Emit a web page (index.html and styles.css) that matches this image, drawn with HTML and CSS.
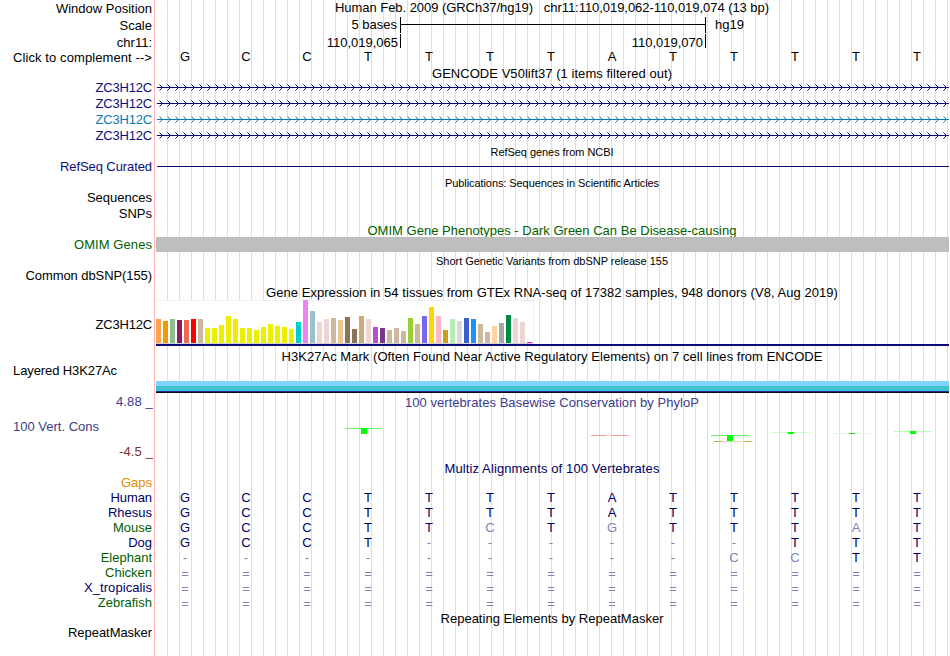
FILE: index.html
```
<!DOCTYPE html>
<html lang="en">

<head>
  <meta charset="UTF-8" />
  <meta name="viewport" content="width=device-width, initial-scale=1.0" />
  <title>Human chr11:110,019,062-110,019,074</title>
  <link rel="stylesheet" href="styles.css">
</head>

<body>
  <div class="browser">
    <!-- position and ruler -->
    <div class="row h17"><div class="label low">Window Position</div>
      <div class="title"><span data-w="434">Human Feb. 2009 (GRCh37/hg19) &nbsp; chr11:110,019,062-110,019,074 (13 bp)</span></div>
    </div>
    <div class="row h17"><div class="label low">Scale</div>
      <div class="ruler">
        <span class="before-tick scale-text">5 bases</span>
        <span class="scale-bar"></span>
        <span class="genome">hg19</span>
      </div>
    </div>
    <div class="row h15"><div class="label low">chr11:</div>
      <div class="ruler">
        <span class="before-tick pos">110,019,065</span>
        <span class="before-tick pos second">110,019,070</span>
      </div>
    </div>
    <div class="row h17"><div class="label low"><span data-w="139">Click to complement --&gt;</span></div><div class="bases" data-seq="GCCTTTTATTTTT"></div></div>

    <!-- GENCODE -->
    <div class="row h14"><div class="label"></div><div class="title"><span data-w="240">GENCODE V50lift37 (1 items filtered out)</span></div></div>
    <div class="row h16 navy"><div class="label"><span data-w="56.5">ZC3H12C</span></div><div class="gene"></div></div>
    <div class="row h16 navy"><div class="label"><span data-w="56.5">ZC3H12C</span></div><div class="gene"></div></div>
    <div class="row h16 blue"><div class="label"><span data-w="56.5">ZC3H12C</span></div><div class="gene"></div></div>
    <div class="row h16 navy"><div class="label"><span data-w="56.5">ZC3H12C</span></div><div class="gene"></div></div>

    <!-- RefSeq -->
    <div class="row h15"><div class="label"></div><div class="title small"><span data-w="123">RefSeq genes from NCBI</span></div></div>
    <div class="row h16 navy"><div class="label"><span data-w="92">RefSeq Curated</span></div><div class="refseq"></div></div>

    <!-- publications -->
    <div class="row h15"><div class="label"></div><div class="title small"><span data-w="214">Publications: Sequences in Scientific Articles</span></div></div>
    <div class="row h16"><div class="label">Sequences</div></div>
    <div class="row h16"><div class="label">SNPs</div></div>

    <!-- OMIM -->
    <div class="row h15 clip green"><div class="label"></div><div class="title low"><span data-w="369">OMIM Gene Phenotypes - Dark Green Can Be Disease-causing</span></div></div>
    <div class="row h15 green"><div class="label"><span data-w="78">OMIM Genes</span></div><div class="omim-band"></div></div>

    <!-- dbSNP -->
    <div class="row h16"><div class="label"></div><div class="title small lower"><span data-w="232">Short Genetic Variants from dbSNP release 155</span></div></div>
    <div class="row h17"><div class="label"><span data-w="126.5">Common dbSNP(155)</span></div></div>

    <!-- GTEx -->
    <div class="row h15"><div class="label"></div><div class="title"><span data-w="572">Gene Expression in 54 tissues from GTEx RNA-seq of 17382 samples, 948 donors (V8, Aug 2019)</span></div></div>
    <div class="row h46"><div class="label gtex-label"><span data-w="56.5">ZC3H12C</span></div>
      <div class="gtex"><div class="gtex-bars" id="gtex"></div></div>
    </div>

    <!-- H3K27Ac -->
    <div class="row h17"><div class="label"></div><div class="title h3k-title"><span data-w="541">H3K27Ac Mark (Often Found Near Active Regulatory Elements) on 7 cell lines from ENCODE</span></div></div>
    <div class="row h18"><div class="label left"><span data-w="104">Layered H3K27Ac</span></div></div>
    <div class="row h12"><div class="label"></div><div class="h3k-band"></div></div>

    <!-- conservation -->
    <div class="row h68 violet">
      <div class="label cons-label">
        <div><span data-w="37">4.88 _</span></div>
        <div class="left">100 Vert. Cons</div>
        <div class="maroon"><span data-w="34">-4.5 _</span></div>
      </div>
      <div class="cons">
        <div class="title"><span data-w="294">100 vertebrates Basewise Conservation by PhyloP</span></div>
        <svg class="wiggle" width="794" height="20" viewBox="155 425 794 20" shape-rendering="crispEdges">
          <path fill="#66ff66" d="M345 428h37v1h-37z" />
          <path fill="#ee9999" d="M592 435h14v1h-14zM612 435h15v1h-15z" />
          <path fill="#f6cccc" d="M590 435h2v1h-2zM606 435h6v1h-6zM627 435h2v1h-2z" />
          <path fill="#66f066" d="M711 435h38v1h-38z" />
          <path fill="#e2dca0" d="M713 441h40v1h-40z" />
          <path fill="#bfb045" d="M714 441h8v1h-8zM745 441h6v1h-6z" />
          <path fill="#c8ffc8" d="M772 432h38v1h-38z" />
          <path fill="#dff8df" d="M833 433h38v1h-38z" />
          <path fill="#b8ffb8" d="M894 431h38v1h-38z" />
          <path fill="#00ff00" d="M361 428h6v6h-6zM727 435h6v6h-6zM788 432h6v2h-6zM910 431h6v3h-6z" />
          <path fill="#10e010" d="M849 433h6v1h-6z" />
        </svg>
      </div>
    </div>

    <!-- multiz alignment -->
    <div class="row h14 multiz"><div class="label"></div><div class="title"><span data-w="215">Multiz Alignments of 100 Vertebrates</span></div></div>
    <div class="row h15"><div class="label orange">Gaps</div></div>
    <div class="row h15 multiz"><div class="label"><span data-w="41.5">Human</span></div><div class="bases" data-seq="GCCTTTTATTTTT"></div></div>
    <div class="row h15 multiz"><div class="label">Rhesus</div><div class="bases" data-seq="GCCTTTTATTTTT"></div></div>
    <div class="row h15 multiz"><div class="label green">Mouse</div><div class="bases" data-seq="GCCTTcTgTTTaT"></div></div>
    <div class="row h15 multiz"><div class="label">Dog</div><div class="bases" data-seq="GCCT------TTT"></div></div>
    <div class="row h15 multiz"><div class="label green">Elephant</div><div class="bases" data-seq="---------ccTT"></div></div>
    <div class="row h15 multiz"><div class="label green">Chicken</div><div class="bases" data-seq="============="></div></div>
    <div class="row h15 multiz"><div class="label"><span data-w="68">X_tropicalis</span></div><div class="bases" data-seq="============="></div></div>
    <div class="row h15 multiz"><div class="label green">Zebrafish</div><div class="bases" data-seq="============="></div></div>

    <!-- RepeatMasker -->
    <div class="row h15"><div class="label"></div><div class="title low"><span data-w="223">Repeating Elements by RepeatMasker</span></div></div>
    <div class="row h16"><div class="label"><span data-w="84">RepeatMasker</span></div></div>
  </div>

  <script src="script.js"></script>
</body>

</html>
```
FILE: styles.css
```
* {
  margin: 0;
  padding: 0;
  box-sizing: border-box;
}

body {
  background: #fff;
  overflow: hidden;
}

.browser {
  width: 949px;
  height: 656px;
  font: 13px/15px "Liberation Sans", Arial, Helvetica, sans-serif;
  color: #000;
  /* pink divider, then a blue guide line every 12px */
  background:
    linear-gradient(#ffb4b4, #ffb4b4) 154px 0 / 1px 100% no-repeat,
    linear-gradient(#fff, #fff) 0 0 / 160px 100% no-repeat,
    repeating-linear-gradient(90deg, transparent 0 11px, #dcdcfa 11px 12px);
}

.row {
  display: grid;
  grid-template-columns: 155px 794px;
}

.h12 { height: 12px; }
.h14 { height: 14px; }
.h15 { height: 15px; }
.h16 { height: 16px; }
.h17 { height: 17px; }
.h18 { height: 18px; }
.h46 { height: 46px; }
.h68 { height: 68px; }

.clip {
  overflow: hidden;
}

.label {
  padding-right: 3px;
  text-align: right;
  white-space: nowrap;
}

.low {
  padding-top: 1px;
}

.left {
  text-align: left;
  padding-left: 13px;
}

.title {
  text-align: center;
  white-space: nowrap;
}

.small {
  padding-top: 1px;
  font-size: 11px;
}

.lower {
  padding-top: 2px;
}

.navy { color: #0c0c78; }
.blue { color: #0c78b4; }
.green,
.multiz .green { color: #006000; }
.violet { color: #3c3c8c; }
.maroon { color: #783232; }
.orange { color: #e68a00; }
.multiz { color: #000064; }

/* ruler */
.ruler {
  display: flex;
}

.before-tick {
  width: 246px;
  border-right: 1px solid #000;
  text-align: right;
}

.scale-text {
  padding-right: 3px;
  height: 16px;
}

.scale-bar {
  width: 305px;
  height: 16px;
  border-right: 1px solid #000;
  background: linear-gradient(#000, #000) 0 7px / 100% 1px no-repeat;
}

.genome {
  padding-left: 9px;
}

.pos {
  height: 14px;
  padding: 1px 2px 0 0;
}

.second {
  width: 305px;
}

/* one cell for each base */
.bases {
  display: grid;
  grid-template-columns: repeat(13, 61px);
  margin-left: -0.5px;
  text-align: center;
}

.faded {
  color: #8282b4;
}

.unaligned {
  padding-top: 1px;
}

.gene svg {
  display: block;
}

.refseq {
  height: 1px;
  margin: 7px 0 0 2px;
  background: #0c0c78;
}

.omim-band {
  margin-left: 1px;
  background: #bebebe;
}

/* expression bars */
.gtex {
  margin-left: 1px;
  border-bottom: 2px solid #0c0c78;
}

.gtex-label {
  padding-top: 17px;
}

.gtex-bars {
  display: flex;
  align-items: flex-end;
  gap: 2px;
  width: 378px;
  height: 44px;
  background: linear-gradient(#f0f0f0, #f0f0f0) 0 0 / 100% 1px no-repeat, #fff;
  border-right: 1px solid #f0f0f0;
  border-bottom: 1px solid #d2d2d2;
}

.gtex-bars div {
  width: 5px;
}

.h3k-title {
  padding-top: 3px;
}

.h3k-band {
  margin-left: 1px;
  background: linear-gradient(#80d2ff 0 5px, #3cc3cd 5px 10px, #28288c 10px 11px, #140020 11px 12px);
}

/* conservation */
.cons-label {
  display: flex;
  flex-direction: column;
  gap: 10px;
  padding: 1px 2px 0 0;
}

.cons {
  padding-top: 2px;
}

.wiggle {
  display: block;
  margin-top: 15px;
}
```
FILE: script.js
```
// bases: lower case means a mismatch, shown faded
document.querySelectorAll('.bases').forEach(function (el) {
  for (let c of el.dataset.seq) {
    let span = document.createElement('span')
    span.textContent = c.toUpperCase()
    if (!/[A-Z]/.test(c)) span.className = 'faded'
    if (c === '=') span.classList.add('unaligned')
    el.appendChild(span)
  }
})

// gene lines with strand arrows every 8px
let arrows = ''
for (let x = 4; x < 794; x += 8) {
  arrows += `M${x + 0.5} 4.5l3 3l-3 3`
}
document.querySelectorAll('.gene').forEach(function (el) {
  el.innerHTML = `<svg width="794" height="16" fill="none" stroke="currentColor"><path d="M2 7.5H794" /><path d="${arrows}" /></svg>`
})

// [height, color] for the 54 tissues
let tissues = [
  [24, '#ffa54f'], [22, '#ee9a00'], [24, '#8fbc8f'], [23, '#8b1c62'], [23, '#ee6a50'], [24, '#ff0000'], [24, '#cdb79e'],
  [15, '#eeee00'], [15, '#eeee00'], [18, '#eeee00'], [27, '#eeee00'], [24, '#eeee00'], [15, '#eeee00'], [15, '#eeee00'],
  [13, '#eeee00'], [16, '#eeee00'], [19, '#eeee00'], [17, '#eeee00'], [16, '#eeee00'], [14, '#eeee00'], [21, '#00cdcd'],
  [43, '#ee82ee'], [32, '#9ac0cd'], [21, '#eed5d2'], [24, '#eed5d2'], [25, '#cdb79e'], [23, '#eec591'], [26, '#8b7355'],
  [14, '#8b7355'], [27, '#cdaa7d'], [24, '#eed5d2'], [16, '#b452cd'], [15, '#7a378b'], [13, '#cdb79e'], [15, '#cdb79e'],
  [12, '#cdb79e'], [25, '#9acd32'], [19, '#cdb79e'], [27, '#7a67ee'], [36, '#ffd700'], [27, '#ffb6c1'], [13, '#cd9b1d'],
  [24, '#b4eeb4'], [22, '#d9d9d9'], [25, '#3a5fcd'], [24, '#1e90ff'], [19, '#cdb79e'], [11, '#cdb79e'], [17, '#ffd39b'],
  [20, '#a6a6a6'], [28, '#008b45'], [25, '#eed5d2'], [21, '#eed5d2'], [1, '#ff00ff']
]
let gtex = document.querySelector('#gtex')
tissues.forEach(function (t) {
  let bar = document.createElement('div')
  bar.style.height = t[0] + 'px'
  bar.style.background = t[1]
  gtex.appendChild(bar)
})

// spread each text to its drawn width
document.querySelectorAll('[data-w]').forEach(function (el) {
  let extra = el.dataset.w - el.getBoundingClientRect().width
  el.style.letterSpacing = extra / el.textContent.length + 'px'
})
```
